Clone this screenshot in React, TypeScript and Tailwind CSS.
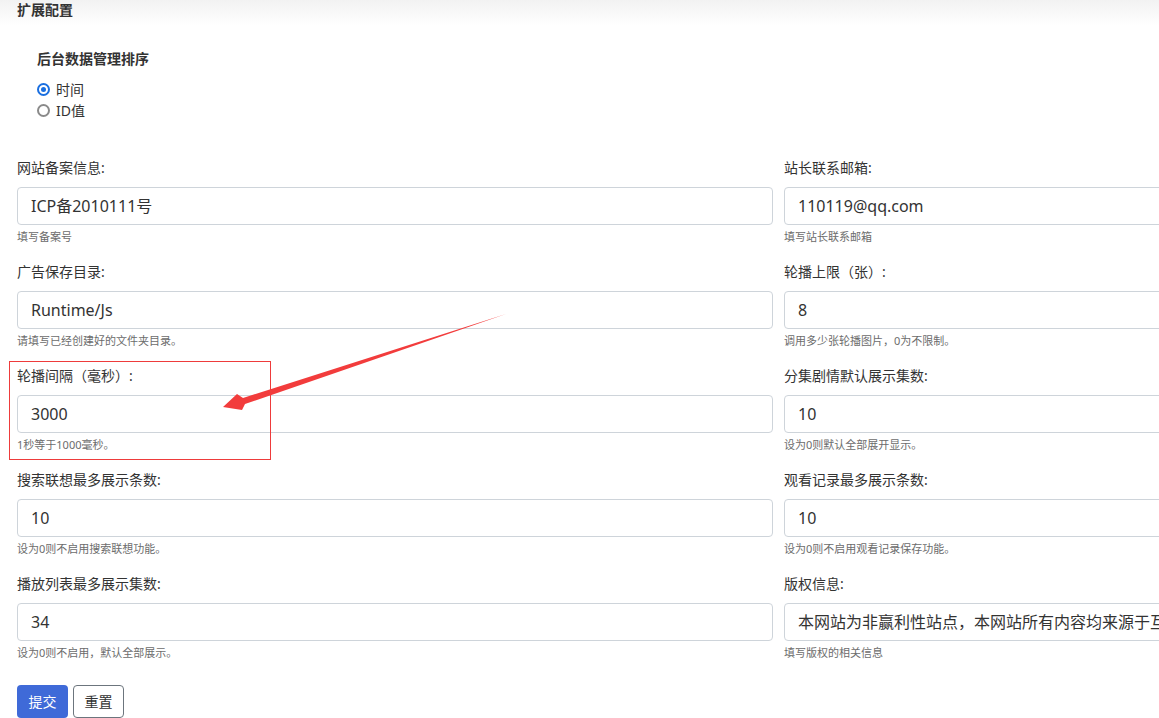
import React from "react";

const fields: { label: string; value: string; help: string }[][] = [
  [
    { label: "网站备案信息:", value: "ICP备2010111号", help: "填写备案号" },
    { label: "站长联系邮箱:", value: "110119@qq.com", help: "填写站长联系邮箱" },
  ],
  [
    { label: "广告保存目录:", value: "Runtime/Js", help: "请填写已经创建好的文件夹目录。" },
    { label: "轮播上限（张）:", value: "8", help: "调用多少张轮播图片，0为不限制。" },
  ],
  [
    { label: "轮播间隔（毫秒）:", value: "3000", help: "1秒等于1000毫秒。" },
    { label: "分集剧情默认展示集数:", value: "10", help: "设为0则默认全部展开显示。" },
  ],
  [
    { label: "搜索联想最多展示条数:", value: "10", help: "设为0则不启用搜索联想功能。" },
    { label: "观看记录最多展示条数:", value: "10", help: "设为0则不启用观看记录保存功能。" },
  ],
  [
    { label: "播放列表最多展示集数:", value: "34", help: "设为0则不启用，默认全部展示。" },
    {
      label: "版权信息:",
      value: "本网站为非赢利性站点，本网站所有内容均来源于互联网相关站点自动搜索采集信息，相关链接已经注明来源。",
      help: "填写版权的相关信息",
    },
  ],
];

function Field({ label, value, help }: { label: string; value: string; help: string }) {
  return (
    <div className="flex flex-col">
      <div className="h-[20px] leading-[20px] text-[14px] text-[#333]">{label}</div>
      <div className="mt-[9px] h-[38px] border border-[#ced4da] rounded-[4px] bg-white flex items-center pl-[13px] overflow-hidden whitespace-nowrap text-[16px] text-[#333]">
        {value}
      </div>
      <div className="mt-[4px] h-[16px] leading-[16px] text-[11px] text-[#6c6c6c]">{help}</div>
    </div>
  );
}

export default function App() {
  return (
    <div
      className="relative w-[1159px] h-[718px] overflow-hidden bg-white"
      style={{ fontFamily: '"Noto Sans", "Noto Sans CJK SC", sans-serif' }}
    >
      <div className="h-[26px] bg-gradient-to-b from-[#f2f2f2] to-white px-[17px]">
        <div className="leading-[20px] text-[14px] font-bold text-[#333]">扩展配置</div>
      </div>

      <div className="pl-[37px] pt-[23px]">
        <div className="h-[20px] leading-[20px] text-[14px] font-bold text-[#333]">后台数据管理排序</div>
        <div className="mt-[10px] flex flex-col">
          <div className="h-[21px] flex items-center gap-[6px] text-[14px] text-[#333]">
            <span className="w-[13px] h-[13px] rounded-full border-[2px] border-[#1a6fe0] flex items-center justify-center">
              <span className="w-[5px] h-[5px] rounded-full bg-[#1a6fe0]" />
            </span>
            <span>时间</span>
          </div>
          <div className="h-[21px] flex items-center gap-[6px] text-[14px] text-[#333]">
            <span className="w-[13px] h-[13px] rounded-full border-[2px] border-[#8a8a8a]" />
            <span>ID值</span>
          </div>
        </div>
      </div>

      <div className="pl-[17px] mt-[37px] grid grid-cols-[756px_756px] gap-x-[11px] gap-y-[17px]">
        {fields.map((row, i) => (
          <React.Fragment key={i}>
            <Field {...row[0]} />
            <Field {...row[1]} />
          </React.Fragment>
        ))}
      </div>

      <div className="pl-[17px] mt-[24px] flex gap-[5px]">
        <button className="w-[51px] h-[33px] rounded-[4px] bg-[#3f6ad8] text-white text-[14px]">提交</button>
        <button className="w-[51px] h-[33px] rounded-[4px] border border-[#6c757d] bg-white text-[#333] text-[14px]">重置</button>
      </div>

      <div className="absolute left-[9px] top-[361px] w-[262px] h-[99px] border border-[#ee3b3b]" />

      <svg className="absolute left-0 top-0 pointer-events-none" width="1159" height="718">
        <polygon points="506,314 243,398 237,394 223,407 242,410 245,404" fill="#f23c3c" />
      </svg>
    </div>
  );
}
